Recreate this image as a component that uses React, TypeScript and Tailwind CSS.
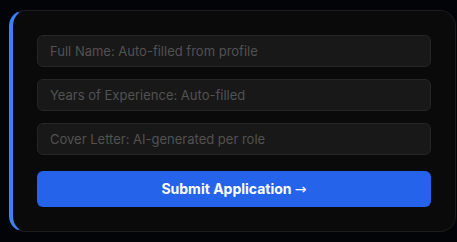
export default function App() {
  const fields = [
    'Full Name: Auto-filled from profile',
    'Years of Experience: Auto-filled',
    'Cover Letter: AI-generated per role',
  ]

  return (
    <div className="min-h-[242px] w-[457px] bg-[#030407] pt-[10px] pl-[9px] pr-px pb-[11px] font-['Inter',sans-serif]">
      <div className="rounded-2xl border border-[#1c1c1f] border-l-4 border-l-[#3b82f6] bg-[#0a0a0a] p-6">
        <div className="flex flex-col gap-3">
          {fields.map((f) => (
            <input
              key={f}
              readOnly
              placeholder={f}
              className="h-8 w-full rounded-md border border-[#262626] bg-[#181818] px-3 text-[13px] text-white placeholder:text-[#525252] outline-none"
            />
          ))}
        </div>
        <button className="mt-4 h-9 w-full rounded-md bg-[#2563eb] text-sm font-bold text-white">
          Submit Application <span className="font-['DejaVu_Sans',sans-serif] font-normal">→</span>
        </button>
      </div>
    </div>
  )
}
